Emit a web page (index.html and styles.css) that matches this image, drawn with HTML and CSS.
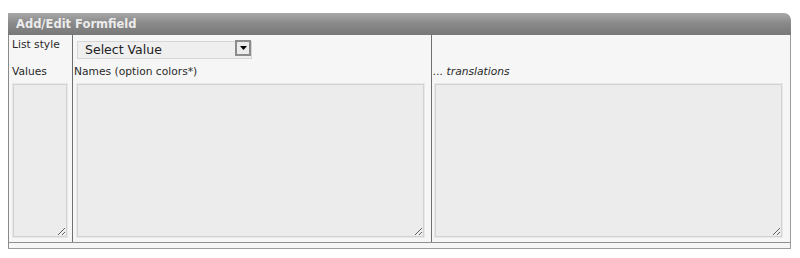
FILE: index.html
```html
<!DOCTYPE html>
<html>
<head>
<meta charset="utf-8">
<link rel="stylesheet" href="styles.css">
</head>
<body>
<div class="panel">
  <div class="panel-head">Add/Edit Formfield</div>
  <div class="panel-body">
    <div class="grid">
      <div class="cell c1 r1 label">List style</div>
      <div class="cell c2 r1">
        <div class="select-wrap">
          <select class="select"><option>Select Value</option></select>
          <span class="arrow"><svg width="7" height="4" viewBox="0 0 7 4"><path d="M0 0H7L3.5 4Z" fill="#000"/></svg></span>
        </div>
      </div>
      <div class="cell c3 r1"></div>

      <div class="cell c1 r2 label">Values</div>
      <div class="cell c2 r2 label">Names (option colors*)</div>
      <div class="cell c3 r2 label italic">... translations</div>

      <div class="cell c1 r3"><textarea class="ta ta-small"></textarea></div>
      <div class="cell c2 r3"><textarea class="ta ta-mid"></textarea></div>
      <div class="cell c3 r3"><textarea class="ta ta-right"></textarea></div>
    </div>
  </div>
</div>
</body>
</html>
```
FILE: styles.css
```css
html, body {
  margin: 0;
  padding: 0;
  background: #ffffff;
}
body {
  font-family: "DejaVu Sans", Verdana, sans-serif;
}
.panel {
  margin: 13px 0 0 8px;
  width: 783px;
}
.panel-head {
  height: 22px;
  line-height: 22px;
  padding-left: 8px;
  background: linear-gradient(#a8a8a8, #8a8a8a 45%, #787878);
  border-top-right-radius: 7px;
  color: #ececec;
  font-weight: bold;
  font-size: 11.5px;
}
.panel-body {
  border: 1px solid #9c9c9c;
  border-top: none;
  border-left: 1px solid #8a8a8a;
  background: #f6f6f6;
  padding-bottom: 5px;
}
.grid {
  display: grid;
  grid-template-columns: 64px 359px 1fr;
  grid-template-rows: 26px 21px auto;
  border-bottom: 1px solid #8f8f8f;
}
.cell.c1, .cell.c2 {
  border-right: 1px solid #6f6f6f;
}
.label {
  font-size: 10.7px;
  line-height: 14px;
  color: #2a2a2a;
}
.c1.r1 { padding: 3px 0 0 3px; }
.c1.r2 { padding: 4px 0 0 3px; }
.c2.r2 { padding: 4px 0 0 1px; }
.c3.r2 { padding: 4px 0 0 1px; }
.italic { font-style: italic; }
.c2.r1 { padding: 4px 0 0 4px; }
.select-wrap {
  position: relative;
  width: 175px;
  height: 18px;
}
.select {
  -webkit-appearance: none;
  appearance: none;
  box-sizing: border-box;
  width: 175px;
  height: 18px;
  margin: 0;
  padding: 0 0 0 7px;
  border: 1px solid #d6d6d6;
  background: #efefef;
  font-family: "DejaVu Sans", Verdana, sans-serif;
  font-size: 12.5px;
  color: #222;
  outline: none;
}
.arrow {
  position: absolute;
  right: 1px;
  top: 1px;
  width: 12px;
  height: 12px;
  border: 2px solid #8c8c8c;
  background: #ececec;
  display: flex;
  align-items: center;
  justify-content: center;
}
.r3 {
  padding: 2px 0 5px 0;
}
.ta {
  display: block;
  box-sizing: border-box;
  height: 153px;
  margin: 0;
  border: 1px solid #d2d2d2;
  box-shadow: 0 0 0 1px #e8e8e8;
  background: #ececec;
  font-family: "DejaVu Sans", sans-serif;
  font-size: 11px;
  outline: none;
}
.ta-small { width: 54px; margin-left: 4px; }
.ta-mid { width: 347px; margin-left: 4px; }
.ta-right { width: 347px; margin-left: 3px; }
```
